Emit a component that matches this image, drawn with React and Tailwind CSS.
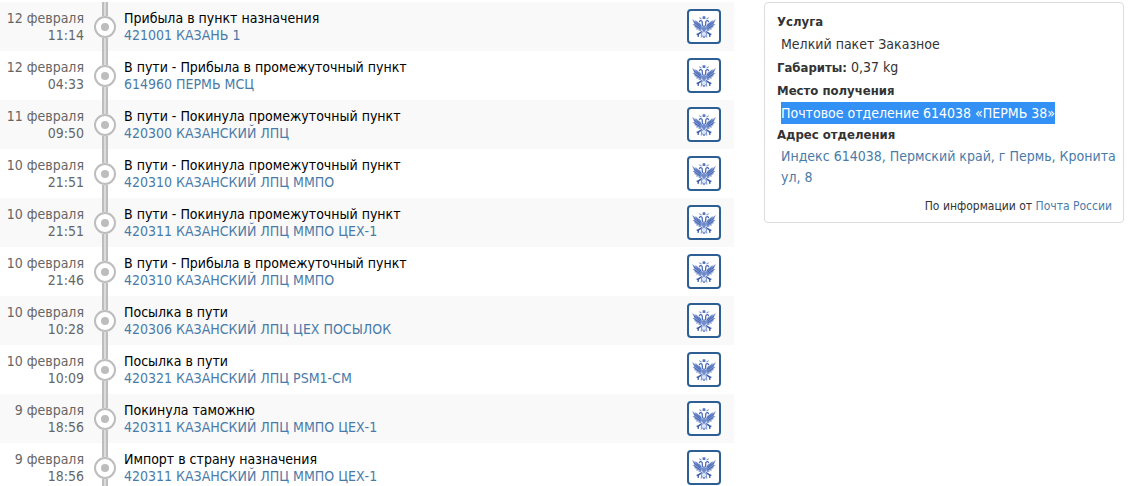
import React from 'react';

const events = [
  { date: '12 февраля', time: '11:14', status: 'Прибыла в пункт назначения', place: '421001 КАЗАНЬ 1' },
  { date: '12 февраля', time: '04:33', status: 'В пути - Прибыла в промежуточный пункт', place: '614960 ПЕРМЬ МСЦ' },
  { date: '11 февраля', time: '09:50', status: 'В пути - Покинула промежуточный пункт', place: '420300 КАЗАНСКИЙ ЛПЦ' },
  { date: '10 февраля', time: '21:51', status: 'В пути - Покинула промежуточный пункт', place: '420310 КАЗАНСКИЙ ЛПЦ ММПО' },
  { date: '10 февраля', time: '21:51', status: 'В пути - Покинула промежуточный пункт', place: '420311 КАЗАНСКИЙ ЛПЦ ММПО ЦЕХ-1' },
  { date: '10 февраля', time: '21:46', status: 'В пути - Прибыла в промежуточный пункт', place: '420310 КАЗАНСКИЙ ЛПЦ ММПО' },
  { date: '10 февраля', time: '10:28', status: 'Посылка в пути', place: '420306 КАЗАНСКИЙ ЛПЦ ЦЕХ ПОСЫЛОК' },
  { date: '10 февраля', time: '10:09', status: 'Посылка в пути', place: '420321 КАЗАНСКИЙ ЛПЦ PSM1-СМ' },
  { date: '9 февраля', time: '18:56', status: 'Покинула таможню', place: '420311 КАЗАНСКИЙ ЛПЦ ММПО ЦЕХ-1' },
  { date: '9 февраля', time: '18:56', status: 'Импорт в страну назначения', place: '420311 КАЗАНСКИЙ ЛПЦ ММПО ЦЕХ-1' },
];

// Left half of the eagle, mirrored for the right one
const EagleHalf = () => (
  <g strokeLinecap="round">
    <path d="M1 4.5C2.6 5.5 3.4 6 4 7L4.2 5.6C5.6 7 6.8 7.4 7.6 8.6L8 8C9.4 9.4 10.2 11 10.4 13L9.4 15.6L6.8 15.4L7.4 14.4L4.4 14.2L5.4 13L2.6 12L4 11.2L1.4 9.4L3 9Z" fill="#7f97d0" />
    <path d="M3 7.5L8.5 12M3.5 10.5L8.5 13.5M5.5 8L9 11" fill="none" stroke="#3f5fae" strokeWidth="0.8" />
    <path d="M11 11C9.8 9.6 11 8 10 6.6C9.3 5.8 8 6 7.8 7" fill="none" stroke="#4a6cb8" strokeWidth="1.2" />
    <path d="M9.6 16.4C8.2 17.2 7.2 19 5.6 18.6M6.8 18.6L6.6 20.6" fill="none" stroke="#3f5fae" strokeWidth="1.3" />
    <path d="M8 3.6L9.4 4.6" stroke="#7f97d0" />
    <path d="M9.8 19L9.4 21.4" stroke="#7f97d0" />
  </g>
);

const PostLogo = () => (
  <span className="flex h-[35px] w-[34px] items-center justify-center rounded border-2 border-[#2d5f94] bg-white">
    <svg viewBox="0 0 24 24" className="h-[26px] w-[26px]" role="img" aria-label="Почта России">
      <EagleHalf />
      <g transform="translate(24 0) scale(-1 1)">
        <EagleHalf />
      </g>
      <path d="M12 10.5L13.8 12V15L12 16.6L10.2 15V12Z" fill="#6f8ccb" />
      <path d="M10.8 4.6L10.6 2.6L12 1.8L13.4 2.6L13.2 4.6Z" fill="#5877bd" />
      <circle cx="12" cy="18.5" r="2.4" fill="#dce5f6" stroke="#7f97d0" strokeWidth="0.9" />
      <path d="M11 21.6H13" stroke="#7f97d0" />
    </svg>
  </span>
);

const TimelineMark = () => (
  <div className="flex w-[22px] shrink-0 flex-col items-center self-stretch">
    <div className="w-[6px] flex-1 border-x-2 border-[#bdbdbd] bg-[#dcdcdc]"></div>
    <div className="flex h-[22px] w-[22px] items-center justify-center rounded-full border-2 border-[#bdbdbd] bg-white">
      <div className="h-2 w-2 rounded-full bg-[#bdbdbd]"></div>
    </div>
    <div className="w-[6px] flex-1 border-x-2 border-[#bdbdbd] bg-[#dcdcdc]"></div>
  </div>
);

const EventRow = ({ event }) => (
  <li className="flex min-h-[49px] items-center pr-[13px] odd:bg-[#f9f9f9]">
    <div className="w-[84px] shrink-0 text-right text-[#666]">
      <div>{event.date}</div>
      <div>{event.time}</div>
    </div>
    <div className="ml-[10px] flex self-stretch">
      <TimelineMark />
    </div>
    <div className="ml-2 min-w-0 flex-1">
      <div className="text-black">{event.status}</div>
      <a href="#" className="block text-[#4a7ba8]">{event.place}</a>
    </div>
    <PostLogo />
  </li>
);

const ParcelInfo = () => (
  <aside className="w-[360px] shrink-0 rounded border border-[#ddd] bg-white pt-2 pr-1 pb-[6px] pl-3 text-[#333]">
    <h3 className="text-[13px] leading-[22px] font-bold">Услуга</h3>
    <p className="pl-1 leading-[22px]">Мелкий пакет Заказное</p>
    <p className="leading-[24px]">
      <b className="text-[13px]">Габариты:</b> 0,37 kg
    </p>
    <h3 className="text-[13px] leading-[22px] font-bold">Место получения</h3>
    <p className="pl-1 leading-[22px]">
      <span className="inline-block bg-[#3390f5] text-white">Почтовое отделение 614038 «ПЕРМЬ 38»</span>
    </p>
    <h3 className="text-[13px] leading-[22px] font-bold">Адрес отделения</h3>
    <p className="pl-1 leading-[21px]">
      <a href="#" className="text-[#4a7ba8]">Индекс 614038, Пермский край, г Пермь, Кронита ул, 8</a>
    </p>
    <p className="mt-2 pr-[7px] text-right text-xs leading-[20px]">
      По информации от <a href="#" className="text-[#4a7ba8]">Почта России</a>
    </p>
  </aside>
);

const App = () => (
  <main className="flex items-start gap-[30px] bg-white pt-[2px] pr-[10px] font-['DejaVu_Sans_Condensed','DejaVu_Sans',sans-serif] text-[14px] leading-[17px]">
    <ol className="min-w-0 flex-1">
      {events.map((event, i) => <EventRow key={i} event={event} />)}
    </ol>
    <ParcelInfo />
  </main>
);

export default App;
